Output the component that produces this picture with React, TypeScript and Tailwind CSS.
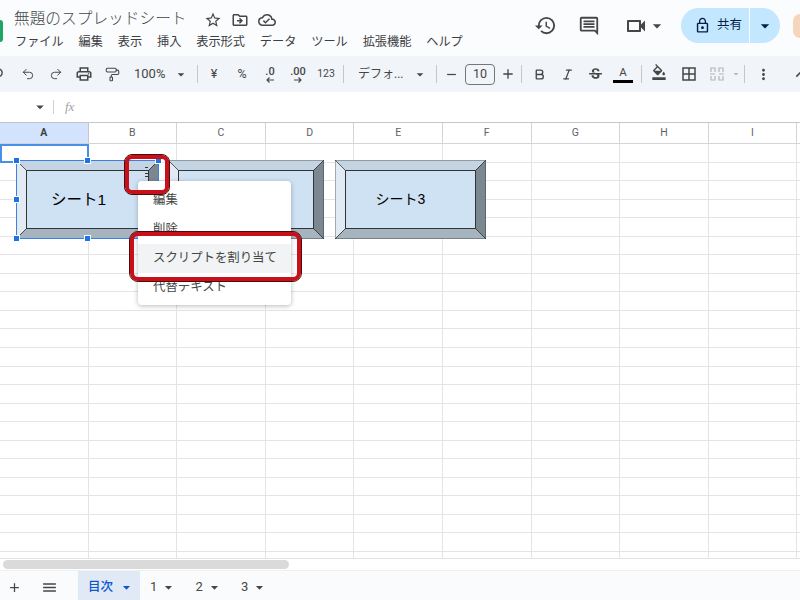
import type { ReactNode } from "react";
import { Bold, Italic, PaintRoller, Redo2, Undo2 } from "lucide-react";
import {
  MdAdd,
  MdArrowDropDown,
  MdBorderAll,
  MdFormatColorFill,
  MdHistory,
  MdKeyboardArrowUp,
  MdLockOutline,
  MdMenu,
  MdMoreVert,
  MdOutlineCloudDone,
  MdOutlineComment,
  MdOutlineDriveFileMove,
  MdOutlinePrint,
  MdOutlineVideocam,
  MdRemove,
  MdSearch,
  MdStarBorder,
  MdStrikethroughS,
} from "react-icons/md";

const menus = ["ファイル", "編集", "表示", "挿入", "表示形式", "データ", "ツール", "拡張機能", "ヘルプ"];
const columns = ["A", "B", "C", "D", "E", "F", "G", "H", "I", ""];
const menuItems = ["編集", "削除", "スクリプトを割り当て", "代替テキスト"];

function Tool({ children }: { children: ReactNode }) {
  return <div className="flex h-full w-7 shrink-0 items-center justify-center text-[#444746]">{children}</div>;
}

function Sep() {
  return <div className="h-[18px] w-px shrink-0 bg-[#c7c7c7]" />;
}

// small arrow under the decimal buttons
function DecimalArrow({ flip }: { flip?: boolean }) {
  return (
    <svg width="8" height="6" viewBox="0 0 8 6" fill="none" stroke="#444746" strokeWidth="1.1" className={flip ? "-scale-x-100" : ""}>
      <path d="M8 3H1M3.5 .5L1 3l2.5 2.5" />
    </svg>
  );
}

function Bevel({ width, label, textClass }: { width: number; label: string; textClass: string }) {
  const h = 79;
  const b = 10.5;
  return (
    <div className="relative h-[79px]" style={{ width }}>
      <svg width={width} height={h} className="block">
        <polygon points={`0,0 ${width},0 ${width - b},${b} ${b},${b}`} fill="#c4d4e2" stroke="#444" strokeWidth="0.8" />
        <polygon points={`0,0 ${b},${b} ${b},${h - b} 0,${h}`} fill="#e2ebf3" stroke="#444" strokeWidth="0.8" />
        <polygon points={`${width},0 ${width},${h} ${width - b},${h - b} ${width - b},${b}`} fill="#7c8891" stroke="#333" strokeWidth="0.8" />
        <polygon points={`0,${h} ${b},${h - b} ${width - b},${h - b} ${width},${h}`} fill="#a6b4c0" stroke="#333" strokeWidth="0.8" />
        <rect x={b} y={b} width={width - 2 * b} height={h - 2 * b} fill="#cfe2f3" stroke="#333" strokeWidth="1" />
      </svg>
      <div className={`absolute inset-0 flex items-center justify-center text-black ${textClass}`}>{label}</div>
    </div>
  );
}

function Handle({ className }: { className: string }) {
  return <div className={`absolute h-[7px] w-[7px] border border-white bg-[#1a73e8] ${className}`} />;
}

export default function App() {
  return (
    <div className="flex h-[600px] w-[800px] flex-col overflow-hidden bg-white font-['Roboto','Noto_Sans_CJK_JP',sans-serif] text-[#444746]">
      {/* title + menu */}
      <div className="flex h-14 shrink-0 bg-[#fbfcfd]">
        <div className="mt-5 h-[22px] w-[3px] shrink-0 rounded-r-sm bg-[#1fa463]" />
        <div className="ml-[11px] flex flex-col">
          <div className="flex h-[31px] items-end text-[#444746]">
            <span className="text-[15.7px] leading-6 font-light tracking-normal">無題のスプレッドシート</span>
            <div className="ml-[17px] flex items-center gap-[9px] pb-[2px] text-[18px]">
              <MdStarBorder />
              <MdOutlineDriveFileMove />
              <MdOutlineCloudDone />
            </div>
          </div>
          <div className="mt-[2px] ml-px flex gap-[14.85px] text-[12.2px] leading-[18px] text-[#3c4043]">
            {menus.map((m) => (
              <span key={m}>{m}</span>
            ))}
          </div>
        </div>
        <div className="ml-auto flex h-[51px] items-center">
          <MdHistory className="text-[23px] text-[#444746]" />
          <MdOutlineComment className="ml-[21px] text-[22px] text-[#444746]" />
          <MdOutlineVideocam className="ml-[24px] text-[24px] text-[#444746]" />
          <MdArrowDropDown className="-ml-px text-[20px] text-[#444746]" />
          <div className="mr-[13px] ml-[14px] flex h-[35px] w-[99px] items-center rounded-full bg-[#c2e7ff] text-[#041e49]">
            <div className="flex h-full w-[69px] items-center justify-end gap-[6px] border-r border-white pr-[7px] text-[12.5px]">
              <MdLockOutline className="text-[17px]" />
              <span>共有</span>
            </div>
            <MdArrowDropDown className="ml-[5px] text-[20px]" />
          </div>
          <div className="h-6 w-[7px] rounded-l-full bg-[#f6d5bd]" />
        </div>
      </div>

      {/* toolbar */}
      <div className="flex h-9 shrink-0 items-center overflow-hidden bg-[#f1f4f8] text-[#444746]">
        <div className="flex h-full w-[14px] shrink-0 items-center justify-end">
          <MdSearch className="mr-[9px] shrink-0 -scale-x-100 text-[17px]" />
        </div>
        <Tool><Undo2 size={14} strokeWidth={1.7} /></Tool>
        <Tool><Redo2 size={14} strokeWidth={1.7} /></Tool>
        <Tool><MdOutlinePrint className="text-[18px]" /></Tool>
        <Tool><PaintRoller size={15} strokeWidth={1.7} /></Tool>
        <span className="ml-[8px] w-[40px] shrink-0 text-[13px]">100%</span>
        <MdArrowDropDown className="ml-[-1px] w-[16px] shrink-0 text-[17px]" />
        <div className="w-[8px] shrink-0" />
        <Sep />
        <div className="w-[2px] shrink-0" />
        <Tool><span className="text-[12.5px]">¥</span></Tool>
        <Tool><span className="text-[12.5px]">%</span></Tool>
        <Tool>
          <div className="flex flex-col items-center">
            <span className="text-[11px] leading-[11px] font-medium">.0</span>
            <DecimalArrow />
          </div>
        </Tool>
        <Tool>
          <div className="flex flex-col items-center">
            <span className="text-[11px] leading-[11px] font-medium">.00</span>
            <DecimalArrow flip />
          </div>
        </Tool>
        <Tool><span className="text-[10.5px]">123</span></Tool>
        <div className="w-[3px] shrink-0" />
        <Sep />
        <span className="ml-[14px] w-[54px] shrink-0 text-[12px] whitespace-nowrap">デフォ...</span>
        <MdArrowDropDown className="w-[16px] shrink-0 text-[17px]" />
        <div className="w-[8px] shrink-0" />
        <Sep />
        <div className="flex w-[28px] shrink-0 justify-center"><MdRemove className="text-[15px]" /></div>
        <div className="flex h-[21px] w-[30px] shrink-0 items-center justify-center rounded border border-[#747775] text-[12.5px]">10</div>
        <div className="flex w-[26px] shrink-0 justify-center"><MdAdd className="text-[16px]" /></div>
        <Sep />
        <div className="w-[3px] shrink-0" />
        <Tool><Bold size={13} strokeWidth={2.5} /></Tool>
        <Tool><Italic size={13} strokeWidth={2.2} /></Tool>
        <Tool><MdStrikethroughS className="text-[17px]" /></Tool>
        <Tool>
          <div className="flex flex-col items-center">
            <span className="text-[11.5px] leading-[13px]">A</span>
            <div className="mt-px h-[3px] w-[20px] bg-black" />
          </div>
        </Tool>
        <div className="w-[4px] shrink-0" />
        <Sep />
        <div className="w-[3px] shrink-0" />
        <Tool><MdFormatColorFill className="-mt-[5px] text-[16px]" /></Tool>
        <div className="w-[2px] shrink-0" />
        <Tool><MdBorderAll className="text-[18px]" /></Tool>
        <Tool>
          <svg width="16" height="16" viewBox="0 0 16 16" fill="none" stroke="#b4b7ba" strokeWidth="1.2">
            <path d="M2 6V2h4v4M10 6V2h4v4M2 10v4h4v-4M10 10v4h4v-4M1 8h5M10 8h5" />
          </svg>
        </Tool>
        <MdArrowDropDown className="-ml-[1px] w-[12px] shrink-0 text-[14px] text-[#b4b7ba]" />
        <div className="w-[2px] shrink-0" />
        <Sep />
        <div className="w-[4px] shrink-0" />
        <Tool><MdMoreVert className="text-[17px]" /></Tool>
        <div className="w-[14px] shrink-0" />
        <MdKeyboardArrowUp className="shrink-0 text-[19px]" />
      </div>

      {/* formula bar */}
      <div className="flex h-[31px] shrink-0 items-center border-b border-[#c7c7c7] pl-[31px]">
        <MdArrowDropDown className="text-[18px]" />
        <div className="ml-[4px] h-[14px] w-px bg-[#d0d0d0]" />
        <span className="ml-[11px] font-['Liberation_Serif',serif] text-[13px] text-[#a0a3a6] italic">fx</span>
      </div>

      {/* column headers */}
      <div className="flex h-[21px] shrink-0 border-b border-[#d4d4d4]">
        {columns.map((c, i) => (
          <div
            key={i}
            className={
              i === 0
                ? "flex w-[88.6px] shrink-0 items-center justify-center border-r border-[#c7c7c7] bg-[#d3e3fd] text-[10.5px] font-bold text-[#3c4043]"
                : "flex w-[88.6px] shrink-0 items-center justify-center border-r border-[#d4d4d4] text-[10.5px] text-[#5f6368]"
            }
          >
            {c}
          </div>
        ))}
      </div>

      {/* sheet */}
      <div className="relative min-h-0 flex-1 overflow-hidden">
        <div className="grid grid-cols-[repeat(10,88.6px)] auto-rows-[18.55px]">
          {Array.from({ length: 230 }, (_, i) => (
            <div key={i} className="border-r border-b border-[#e4e4e4]" />
          ))}
        </div>

        {/* selected cell A1 */}
        <div className="absolute top-0 left-0 h-[19px] w-[89px] border-2 border-[#4a8fe7]" />

        {/* drawings */}
        <div className="absolute top-4 left-[168px]">
          <Bevel width={156} label="シート2" textClass="text-[15px]" />
        </div>
        <div className="absolute top-4 left-[335px]">
          <Bevel width={151} label="シート3" textClass="pr-[20px] font-['Liberation_Sans','Noto_Sans_CJK_JP',sans-serif] text-[14px]" />
        </div>
        <div className="absolute top-4 left-4">
          <Bevel width={143} label="シート1" textClass="pr-[18px] font-['Liberation_Sans','Noto_Sans_CJK_JP',sans-serif] text-[15.5px]" />
          <div className="absolute inset-0 border border-[#3b82e0]" />
          <Handle className="-top-[3px] -left-[3px]" />
          <Handle className="-top-[3px] left-[68px]" />
          <Handle className="-top-[3px] -right-[3px]" />
          <Handle className="top-[36px] -left-[3px]" />
          <Handle className="-bottom-[3px] -left-[3px]" />
          <Handle className="-bottom-[3px] left-[68px]" />
          <div className="absolute top-[7px] left-[129px] flex flex-col gap-[2px]">
            <div className="h-px w-[3px] bg-[#333]" />
            <div className="h-px w-[3px] bg-[#333]" />
            <div className="h-px w-[3px] bg-[#333]" />
            <div className="h-px w-[3px] bg-[#333]" />
          </div>
        </div>

        {/* context menu */}
        <div className="absolute top-[37px] left-[138px] flex h-[124px] w-[153px] flex-col justify-center rounded bg-white pt-px shadow-[0_1px_5px_rgba(0,0,0,0.28)]">
          {menuItems.map((item, i) => (
            <div
              key={item}
              className={
                i === 2
                  ? "flex h-[29px] items-center bg-[#f1f3f4] pl-[15px] text-[12.4px] text-[#444746]"
                  : "flex h-[29px] items-center pl-[15px] text-[12.4px] text-[#444746]"
              }
            >
              {item}
            </div>
          ))}
        </div>

        {/* red callouts */}
        <div className="absolute top-[11px] left-[125px] h-[39px] w-[44px] rounded-[7px] border-4 border-[#c8101a] outline-1 outline-[#4d0b0b]" />
        <div className="absolute top-[88px] left-[130px] h-[49px] w-[171px] rounded-[8px] border-4 border-[#c8101a] outline-1 outline-[#4d0b0b]" />
      </div>

      {/* scrollbar */}
      <div className="flex h-3 shrink-0 items-center border-t border-[#e4e4e4] bg-white pl-[3px]">
        <div className="h-[9px] w-[286px] rounded-full bg-[#dadada]" />
      </div>

      {/* sheet tabs */}
      <div className="flex h-[30px] shrink-0 items-center border-t border-[#eef0f2] bg-[#f9fbfd] pt-[3px] text-[13px]">
        <MdAdd className="ml-[7px] text-[15px]" />
        <MdMenu className="ml-[19px] text-[17px]" />
        <div className="-mt-[3px] ml-[20px] flex h-[30px] w-[62px] items-center bg-[#e1e9f7] pt-[3px] pl-[10px] text-[12.5px] font-medium text-[#0b57d0]">
          <span>目次</span>
          <MdArrowDropDown className="ml-[5px] text-[17px]" />
        </div>
        <div className="ml-[10px] flex w-[45.5px] items-center">
          <span>1</span>
          <MdArrowDropDown className="ml-[3px] text-[17px]" />
        </div>
        <div className="flex w-[45.5px] items-center">
          <span>2</span>
          <MdArrowDropDown className="ml-[3px] text-[17px]" />
        </div>
        <div className="flex w-[46px] items-center">
          <span>3</span>
          <MdArrowDropDown className="ml-[3px] text-[17px]" />
        </div>
      </div>
    </div>
  );
}
